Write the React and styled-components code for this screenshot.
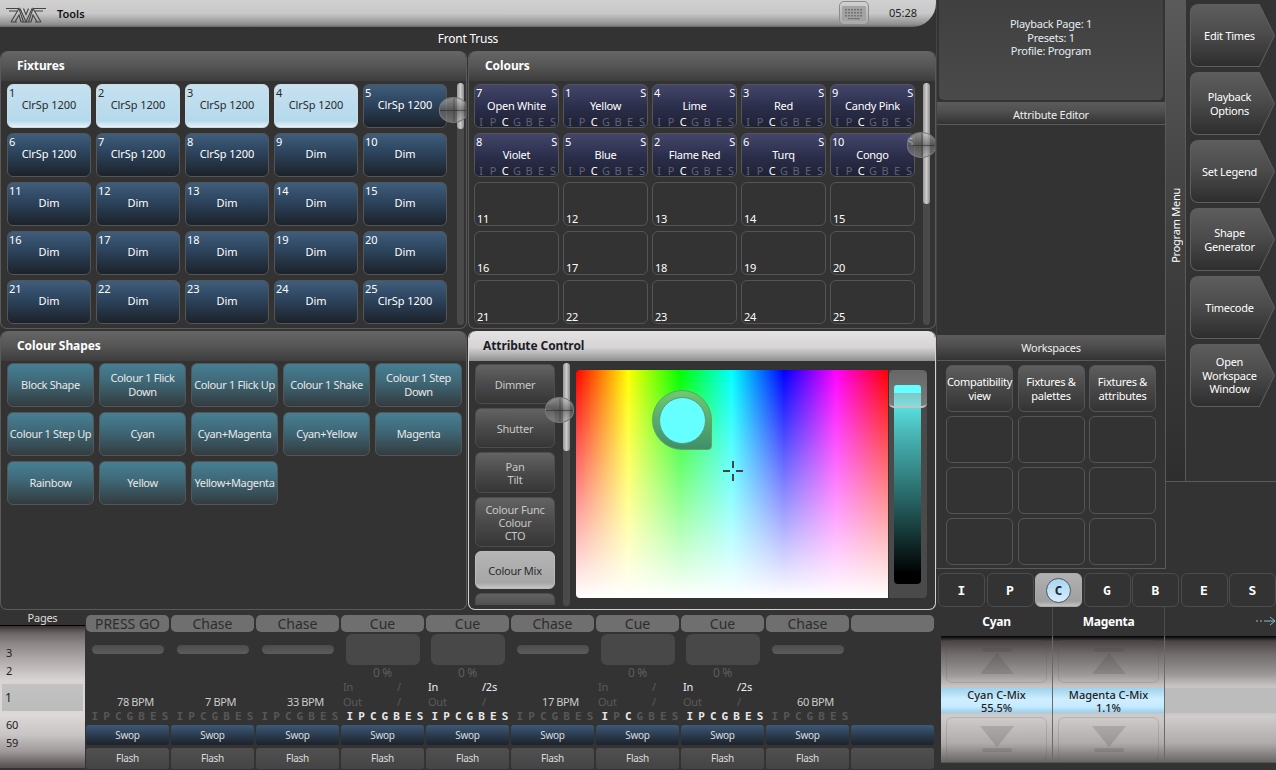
import React from 'react';
import styled, { createGlobalStyle } from 'styled-components';

const FONT = `"Noto Sans", "DejaVu Sans", sans-serif`;
const FLAG_FONT = `"DejaVu Sans Mono", monospace`;

const GlobalStyle = createGlobalStyle`
  html, body {
    margin: 0;
    padding: 0;
    background: #333;
  }
  * {
    box-sizing: border-box;
  }
  body {
    font-family: ${FONT};
    font-size: 11px;
    letter-spacing: -0.25px;
    color: #fff;
    overflow: hidden;
  }
`;

const Page = styled.div`
  width: 1276px;
  height: 770px;
  display: flex;
  background: #333;
  overflow: hidden;
`;

const MainColumn = styled.div`
  width: 936px;
  display: flex;
  flex-direction: column;
`;

const TitleBar = styled.div`
  height: 27px;
  display: flex;
  align-items: center;
  padding: 0 10px 0 6px;
  background: linear-gradient(#d0d0d0 0, #c8c8c8 50%, #8f8f8f 90%, #6a6a6a 100%);
  border-bottom-right-radius: 24px;
  color: #111;
`;

const ToolsLabel = styled.span`
  margin-left: 11px;
  font-size: 11px;
  font-weight: 600;
  letter-spacing: 0;
`;

const Spacer = styled.div`
  flex: 1;
`;

const KeyboardButton = styled.div`
  width: 30px;
  height: 24px;
  margin-top: -1px;
  display: flex;
  align-items: center;
  justify-content: center;
  border: 1px solid #8b8b8b;
  border-radius: 5px;
  background: linear-gradient(#d2d2d2, #a9a9a9);
`;

const Clock = styled.span`
  margin-left: 20px;
  margin-right: 9px;
  padding-bottom: 2px;
  font-size: 11px;
  letter-spacing: 0;
  color: #222;
`;

const Caption = styled.div`
  height: 24px;
  text-align: center;
  line-height: 24px;
  font-size: 12px;
`;

const PanelGrid = styled.div`
  display: grid;
  grid-template-columns: 468px 468px;
  grid-template-rows: 278px 279px;
  row-gap: 2px;
`;

const Panel = styled.section`
  position: relative;
  height: 100%;
  margin-right: ${(p) => (p.$last ? 0 : 1)}px;
  border: 1px solid ${(p) => (p.$active ? '#d8d0d0' : '#5a5a5a')};
  border-top: 0;
  border-radius: 7px;
  overflow: hidden;
`;

const PanelHeader = styled.h2`
  margin: 0;
  height: 30px;
  padding-left: ${(p) => (p.$active ? 14 : 16)}px;
  line-height: 29px;
  font-size: 12px;
  font-weight: 700;
  letter-spacing: -0.1px;
  color: ${(p) => (p.$active ? '#1c1c28' : '#fff')};
  background: ${(p) =>
    p.$active
      ? 'linear-gradient(#e4e2e2, #d6d4d4 55%, #8f8f8f)'
      : 'linear-gradient(#666, #555 50%, #3d3d3d)'};
  border-top-left-radius: 7px;
  border-top-right-radius: 7px;
`;

const CellGrid = styled.div`
  display: grid;
  grid-template-columns: repeat(5, ${(p) => p.$w}px);
  grid-auto-rows: ${(p) => p.$h}px;
  column-gap: ${(p) => p.$gapX}px;
  row-gap: 5px;
  padding: ${(p) => p.$top}px 0 0 ${(p) => p.$left}px;
`;

const FixtureCell = styled.div`
  position: relative;
  display: flex;
  align-items: center;
  justify-content: center;
  padding-bottom: 4px;
  border: 1px solid ${(p) => (p.$selected ? '#cfd8dc' : '#555')};
  border-radius: 6px;
  font-size: 11px;
  letter-spacing: -0.05px;
  color: ${(p) => (p.$selected ? '#2a2a2a' : '#fff')};
  background: ${(p) =>
    p.$selected
      ? 'linear-gradient(#c6e1f0, #b4d9ec 85%, #e6f2f8)'
      : 'linear-gradient(#3f5d7c, #2e4660 40%, #1c222b)'};
`;

const CellNumber = styled.span`
  position: absolute;
  top: 1px;
  left: 1px;
  font-size: 11px;
  line-height: 13px;
`;

const PaletteCell = styled.div`
  position: relative;
  display: flex;
  justify-content: center;
  padding-top: 13px;
  border: 1px solid #555;
  border-radius: 6px;
  font-size: 11px;
  line-height: 16px;
  background: linear-gradient(#43466a, #2c2f4c 50%, #1f2133);
`;

const PaletteFlag = styled.span`
  position: absolute;
  top: 1px;
  right: 1px;
  line-height: 13px;
`;

const AttributeLetters = styled.div`
  position: absolute;
  left: 0;
  bottom: -1px;
  display: grid;
  grid-template-columns: repeat(7, 12px);
  justify-items: center;
  font-size: 11px;
  line-height: 13px;
`;

const Letter = styled.span`
  color: ${(p) => (p.$on ? '#fff' : '#5e627b')};
`;

const EmptyCell = styled.div`
  position: relative;
  border: 1px solid #555;
  border-radius: 6px;
`;

const EmptyNumber = styled.span`
  position: absolute;
  left: 2px;
  bottom: 0;
  line-height: 13px;
`;

const ShapeCell = styled.div`
  display: flex;
  align-items: center;
  justify-content: center;
  text-align: center;
  line-height: 14px;
  border: 1px solid #555;
  border-radius: 6px;
  font-size: 11px;
  letter-spacing: -0.35px;
  color: #e8e8e8;
  background: linear-gradient(#477f93, #3f6a7a 40%, #333c40);
`;

const ScrollTrack = styled.div`
  position: absolute;
  top: ${(p) => p.$top}px;
  bottom: 3px;
  left: ${(p) => p.$left}px;
  width: 7px;
  border-radius: 4px;
  background: #4a4a4a;
`;

const ScrollFill = styled.div`
  width: 100%;
  height: ${(p) => p.$h}px;
  border-radius: 4px;
  background: linear-gradient(90deg, #999, #ccc 50%, #888);
`;

const ScrollBall = styled.div`
  position: absolute;
  top: ${(p) => p.$top}px;
  left: ${(p) => p.$left}px;
  width: 29px;
  height: 26px;
  border-radius: 50% / 45%;
  border: 1px solid #777;
  background:
    linear-gradient(transparent 48%, rgba(40, 40, 40, 0.55) 48%, rgba(40, 40, 40, 0.55) 54%, transparent 54%),
    linear-gradient(90deg, transparent 48%, rgba(40, 40, 40, 0.25) 48%, rgba(40, 40, 40, 0.25) 54%, transparent 54%),
    linear-gradient(rgba(200, 200, 200, 0.6), rgba(100, 100, 100, 0.7) 50%, rgba(170, 170, 170, 0.5));
`;

const ControlBody = styled.div`
  display: flex;
  height: 247px;
  padding: 3px 0 0 6px;
`;

const AttributeList = styled.div`
  width: 80px;
  height: 241px;
  display: flex;
  flex-direction: column;
  gap: 4px;
  overflow: hidden;
`;

const AttributeButton = styled.div`
  flex: none;
  height: ${(p) => p.$h}px;
  display: flex;
  align-items: center;
  justify-content: center;
  text-align: center;
  line-height: 13px;
  border: 1px solid ${(p) => (p.$selected ? '#bbb' : '#4d4d4d')};
  border-radius: 6px;
  font-size: 11px;
  color: ${(p) => (p.$selected ? '#2b2b2b' : '#c8c8c8')};
  background: ${(p) =>
    p.$selected ? 'linear-gradient(#b5b5b5, #a6a6a6 85%, #c4c4c4)' : 'linear-gradient(#636363, #4a4a4a 50%, #363636)'};
`;

const ColourField = styled.div`
  position: relative;
  width: 312px;
  height: 228px;
  margin: 6px 0 0 21px;
  border-radius: 4px 0 0 4px;
  background:
    linear-gradient(rgba(255, 255, 255, 0), #fff),
    linear-gradient(90deg, #f00, #ff0 16.67%, #0f0 33.33%, #0ff 50%, #00f 66.67%, #f0f 83.33%, #f00);
`;

const Pin = styled.div`
  position: absolute;
  left: 76px;
  top: 20px;
  width: 60px;
  height: 60px;
  display: flex;
  align-items: center;
  justify-content: center;
  border-radius: 50% 50% 4px 50%;
  background: linear-gradient(#6fca6f, #3f8f6b);
  border: 1px solid #5fa55f;
`;

const PinDot = styled.div`
  width: 47px;
  height: 47px;
  border-radius: 50%;
  background: #6ff;
  border: 1px solid #5d9a7a;
`;

const CrossMark = styled.svg`
  position: absolute;
  left: 147px;
  top: 91px;
`;

const LevelPanel = styled.div`
  position: relative;
  width: 38px;
  height: 228px;
  margin: 6px 0 0 1px;
  padding: 15px 6px 14px 5px;
  border-radius: 0 4px 4px 0;
  background: #4a4a4a;
`;

const LevelBar = styled.div`
  height: 100%;
  border-radius: 4px;
  background: linear-gradient(#6ff, #48b4b4 25%, #2a6a6a 55%, #000 95%);
`;

const LevelThumb = styled.div`
  position: absolute;
  top: 0;
  left: 0;
  width: 38px;
  height: 38px;
  border-radius: 5px;
  border-bottom: 2px solid #c4c4c4;
  background: linear-gradient(#666, rgba(130, 130, 130, 0.65) 35%, rgba(205, 215, 215, 0.35));

  &::after {
    content: '';
    position: absolute;
    left: 5px;
    right: 6px;
    top: 15px;
    height: 8px;
    border-radius: 3px 3px 0 0;
    background: #6ff;
  }
`;

const PlaybackStrip = styled.div`
  flex: 1;
  display: flex;
`;

const PagesColumn = styled.div`
  width: 85px;
  margin-right: 1px;
  display: flex;
  flex-direction: column;
`;

const PagesTitle = styled.div`
  height: 16px;
  line-height: 16px;
  text-align: center;
  font-size: 11px;
  color: #ddd;
  border-bottom: 1px solid #000;
`;

const PagesWheel = styled.div`
  height: 142px;
  padding-top: 18px;
  font-size: 11px;
  color: #222;
  background: linear-gradient(#3a3232, #6a6464 5%, #8e8888 13%, #b0aaaa 24%, #d8d4d4 38%, #dcd8d8 63%, #c8c4c4 77%, #a09a9a 88%, #5a5555 99%);
`;

const PageItem = styled.div`
  height: ${(p) => p.$h}px;
  line-height: ${(p) => p.$h}px;
  padding-left: 6px;
`;

const PageCurrent = styled.div`
  height: 27px;
  margin: 4px 2px 5px 2px;
  padding-left: 3px;
  line-height: 27px;
  font-size: 12px;
  background: linear-gradient(#c2c2c2, #bcbcbc);
`;

const PlaybackList = styled.div`
  display: flex;
  gap: 2px;
`;

const PlaybackColumn = styled.div`
  width: 83px;
  padding-top: 5px;
  display: flex;
  flex-direction: column;
`;

const Legend = styled.div`
  height: 17px;
  line-height: 17px;
  border-radius: 5px;
  background: #6f6f6f;
  text-align: center;
  font-size: 14px;
  letter-spacing: 0;
  color: #2d2d2d;
`;

const FaderArea = styled.div`
  height: 33px;
  margin-top: 1px;
  display: flex;
  align-items: center;
  justify-content: center;
`;

const BarMeter = styled.div`
  width: 72px;
  height: 9px;
  border-radius: 5px;
  background: linear-gradient(#4c4c4c, #5c5c5c);
`;

const BoxMeter = styled.div`
  width: 74px;
  height: 31px;
  border-radius: 6px;
  background: #484848;
`;

const StatusArea = styled.div`
  position: relative;
  height: 42px;
`;

const Percent = styled.div`
  text-align: center;
  line-height: 13px;
  font-size: 12px;
  color: #5e5e5e;
`;

const Bpm = styled.div`
  position: absolute;
  left: 0;
  right: 0;
  top: 29px;
  padding-left: 16px;
  text-align: center;
  line-height: 14px;
  font-size: 11px;
  letter-spacing: -0.4px;
  color: #ccc;
`;

const TimeRow = styled.div`
  display: flex;
  padding-left: 2px;
  height: 15px;
  line-height: 15px;
  font-size: 11px;
  color: ${(p) => (p.$lit ? '#eee' : '#5a5a5a')};
`;

const TimeLabel = styled.span`
  width: 54px;
`;

const Flags = styled.div`
  height: 16px;
  display: grid;
  grid-template-columns: repeat(7, 11.7px);
  justify-items: center;
  padding-left: 3px;
  line-height: 17px;
  font-family: ${FLAG_FONT};
  font-size: 11px;
  font-weight: 700;
  letter-spacing: 0;
`;

const Flag = styled.span`
  color: ${(p) => (p.$on ? '#e8e8e8' : '#585858')};
`;

const SwopKey = styled.div`
  height: 20px;
  margin-top: 1px;
  line-height: 20px;
  text-align: center;
  font-size: 10px;
  color: #ddd;
  border-radius: 3px;
  background: linear-gradient(#3e5a78, #2c3f54 45%, #1d2229);
`;

const FlashKey = styled.div`
  height: 21px;
  margin-top: 3px;
  line-height: 21px;
  text-align: center;
  font-size: 10px;
  color: #ddd;
  border-radius: 3px;
  background: linear-gradient(#505050, #444);
`;

const SideColumn = styled.div`
  width: 340px;
  display: flex;
  flex-direction: column;
`;

const SideTop = styled.div`
  height: 573px;
  display: flex;
`;

const EditorColumn = styled.div`
  width: 230px;
  height: 569px;
  display: flex;
  flex-direction: column;
  border-right: 1px solid #5a5a5a;
  border-bottom: 1px solid #5a5a5a;
  border-left: 1px solid #444;
`;

const InfoBox = styled.div`
  height: 100px;
  flex: none;
  margin: 0 2px 2px 2px;
  padding-top: 17px;
  border-radius: 0 0 5px 5px;
  background: linear-gradient(#404040, #4a4a4a);
  text-align: center;
  line-height: 13.5px;
  font-size: 11px;
  color: #e4ecf2;
`;

const SectionHeader = styled.div`
  height: ${(p) => p.$h}px;
  flex: none;
  line-height: ${(p) => p.$lh}px;
  text-align: center;
  font-size: 11px;
  color: #eee;
  border-bottom: 1px solid #5a5a5a;
  background: linear-gradient(#5c5c5c, #505050 40%, #333);
`;

const EditorBody = styled.div`
  height: ${(p) => p.$h}px;
  flex: none;
`;

const WorkspaceGrid = styled.div`
  display: grid;
  grid-template-columns: repeat(3, 67px);
  grid-auto-rows: 46.5px;
  column-gap: 4.5px;
  row-gap: 4.5px;
  padding: 4px 0 0 9px;
`;

const WorkspaceCell = styled.div`
  display: flex;
  align-items: center;
  justify-content: center;
  padding-top: 1px;
  text-align: center;
  line-height: 14px;
  font-size: 11px;
  border: 1px solid #555;
  border-radius: 6px;
  background: ${(p) => (p.$filled ? 'linear-gradient(#5e5e5e, #4a4a4a 45%, #343434)' : 'transparent')};
`;

const ProgramSide = styled.div`
  flex: 1;
  display: flex;
  height: 482px;
  border-bottom: 1px solid #5a5a5a;
`;

const ProgramStrip = styled.div`
  width: 20px;
  display: flex;
  align-items: center;
  justify-content: center;
  padding-bottom: 30px;
  border-right: 1px solid #5a5a5a;
  background: linear-gradient(#5a5a5a, #444 40%, #2e2e2e);
`;

const ProgramLabel = styled.span`
  writing-mode: vertical-rl;
  transform: rotate(180deg);
  font-size: 11px;
`;

const ChevronList = styled.div`
  flex: 1;
  display: flex;
  flex-direction: column;
  gap: 5px;
  padding: 4px 0 0 4px;
`;

const Chevron = styled.div`
  width: 85px;
  height: 63px;
  padding: 1px;
  border-radius: 8px 0 0 8px;
  background: #5e5e5e;
  clip-path: polygon(0 0, 82% 0, 100% 50%, 82% 100%, 0 100%);
`;

const ChevronInner = styled.div`
  width: 100%;
  height: 100%;
  display: flex;
  align-items: center;
  justify-content: center;
  padding-right: 6px;
  text-align: center;
  line-height: 13.5px;
  font-size: 11px;
  border-radius: 7px 0 0 7px;
  clip-path: polygon(0 0, 82% 0, 100% 50%, 82% 100%, 0 100%);
  background: linear-gradient(#5d5d5d, #4c4c4c 45%, #2e2e2e);
`;

const GroupBar = styled.div`
  height: 34px;
  display: flex;
  gap: 1.5px;
  padding-left: 2px;
`;

const GroupButton = styled.div`
  width: 47px;
  display: flex;
  align-items: center;
  justify-content: center;
  border: 1px solid ${(p) => (p.$selected ? '#aaa' : '#4c4c4c')};
  border-radius: 6px;
  font-family: ${FLAG_FONT};
  font-size: 13px;
  font-weight: 700;
  letter-spacing: 0;
  background: ${(p) => (p.$selected ? 'linear-gradient(#b0b0b0, #a0a0a0 85%, #c4c4c4)' : 'transparent')};
`;

const GroupDot = styled.span`
  width: 25px;
  height: 25px;
  display: flex;
  align-items: center;
  justify-content: center;
  border-radius: 50%;
  border: 1px solid #556;
  color: #223;
  background: linear-gradient(#a8d6f2, #d6eefc);
`;

const WheelHeaders = styled.div`
  display: flex;
  height: 29px;
  margin-left: 5px;
`;

const WheelHeading = styled.div`
  position: relative;
  flex: none;
  width: 112px;
  line-height: 27px;
  padding-top: 1px;
  text-align: center;
  font-size: 12px;
  font-weight: 700;
  border-right: 1px solid #4d4d4d;
`;

const PageArrow = styled.svg`
  position: absolute;
  top: 9px;
  right: 0;
`;

const WheelArea = styled.div`
  margin-left: 5px;
  height: 127px;
  display: flex;
  overflow: hidden;
  border-bottom: 1px solid #555;
  background: linear-gradient(#000 0, #4a4444 4%, #706a6a 14%, #9a9696 30%, #c8c4c4 40%, #c4c4c4 60%, #d0cccc 64%, #b0acac 85%, #6a6666 100%);
`;

const WheelColumn = styled.div`
  flex: none;
  width: 112px;
  display: flex;
  flex-direction: column;
  border-right: 1px solid #6a6a6a;
`;

const WheelStep = styled.div`
  height: ${(p) => p.$h}px;
  margin: ${(p) => p.$before}px 5px ${(p) => p.$after}px 5px;
  display: flex;
  flex-direction: column;
  align-items: center;
  justify-content: flex-start;
  padding-top: ${(p) => p.$pad}px;
  gap: 1px;
  border: 1px solid rgba(90, 90, 90, 0.22);
  border-radius: 6px;
`;

const WheelTriangle = styled.div`
  width: 0;
  height: 0;
  border-left: 17px solid transparent;
  border-right: 17px solid transparent;
  ${(p) =>
    p.$up
      ? 'border-bottom: 21px solid rgba(70, 70, 70, 0.2);'
      : 'border-top: 21px solid rgba(70, 70, 70, 0.2);'}
`;

const WheelDash = styled.div`
  width: 30px;
  height: 4px;
  border-radius: 2px;
  background: rgba(70, 70, 70, 0.2);
`;

const WheelValue = styled.div`
  height: 25px;
  line-height: 13px;
  text-align: center;
  font-size: 11px;
  font-weight: 500;
  letter-spacing: 0;
  color: #222;
  background: linear-gradient(#9ed2ee, #cfeeff 45%, #c4eaff 75%, #9ccde8);
`;

const WheelBand = styled.div`
  height: 25px;
  margin-top: 52px;
  background: #bcbcbc;
`;

const FixtureNames = [
  ...Array(8).fill('ClrSp 1200'),
  ...Array(16).fill('Dim'),
  'ClrSp 1200',
];

const paletteCells = [
  [7, 'Open White'],
  [1, 'Yellow'],
  [4, 'Lime'],
  [3, 'Red'],
  [9, 'Candy Pink'],
  [8, 'Violet'],
  [5, 'Blue'],
  [2, 'Flame Red'],
  [6, 'Turq'],
  [10, 'Congo'],
];

const shapes = [
  'Block Shape',
  'Colour 1 Flick Down',
  'Colour 1 Flick Up',
  'Colour 1 Shake',
  'Colour 1 Step Down',
  'Colour 1 Step Up',
  'Cyan',
  'Cyan+Magenta',
  'Cyan+Yellow',
  'Magenta',
  'Rainbow',
  'Yellow',
  'Yellow+Magenta',
];

const attributes = [
  ['Dimmer', 40],
  ['Shutter', 40],
  [['Pan', 'Tilt'], 41],
  [['Colour Func', 'Colour', 'CTO'], 50],
  ['Colour Mix', 38, true],
  ['', 30],
];

const playbacks = [
  { legend: 'PRESS GO', meter: 'bar', bpm: '78 BPM', lit: '' },
  { legend: 'Chase', meter: 'bar', bpm: '7 BPM', lit: '' },
  { legend: 'Chase', meter: 'bar', bpm: '33 BPM', lit: '' },
  { legend: 'Cue', meter: 'box', lit: 'IPCGBES', inLit: false, time: true },
  { legend: 'Cue', meter: 'box', lit: 'IPCGBES', inLit: true, time: true },
  { legend: 'Chase', meter: 'bar', bpm: '17 BPM', lit: '' },
  { legend: 'Cue', meter: 'box', lit: 'IC', inLit: false, time: true },
  { legend: 'Cue', meter: 'box', lit: 'IPCGBES', inLit: true, time: true },
  { legend: 'Chase', meter: 'bar', bpm: '60 BPM', lit: '' },
  { legend: '', blank: true },
];

const LETTERS = 'IPCGBES'.split('');

const Lines = ({ value }) =>
  (Array.isArray(value) ? value : [value]).map((line, i) => (
    <React.Fragment key={i}>
      {i > 0 && <br />}
      {line}
    </React.Fragment>
  ));

const Logo = () => (
  <svg width="40" height="20" viewBox="0 0 40 20" fill="none" stroke="#444" strokeWidth="1.1">
    <path d="M0 4.5h13M27 4.5h13M3 7h8M29 7h8" />
    <path d="M5 18L13 4.5l4.5 13.5M9 18l4-7 2 7" />
    <path d="M14 4.5l6 13.5 6-13.5M17.5 4.5l2.5 6 2.5-6" />
    <path d="M22.5 18L27 4.5l8 13.5M25 18l2-7 4 7" />
    <path d="M5 18h6M15 18h10M29 18h6" />
  </svg>
);

const KeyboardIcon = () => (
  <svg width="24" height="15" viewBox="0 0 24 15">
    <rect x="0" y="0" width="24" height="15" rx="1" fill="#a3a3a3" />
    <g fill="#747474">
      {[3, 6, 9].map((y) =>
        [3, 6, 9, 12, 15, 18].map((x) => <rect key={`${x}-${y}`} x={x} y={y} width="2" height="1.5" />)
      )}
      <rect x="6" y="12" width="12" height="1.2" />
    </g>
  </svg>
);

const App = () => (
  <Page>
    <GlobalStyle />
    <MainColumn>
      <TitleBar>
        <Logo />
        <ToolsLabel>Tools</ToolsLabel>
        <Spacer />
        <KeyboardButton>
          <KeyboardIcon />
        </KeyboardButton>
        <Clock>05:28</Clock>
      </TitleBar>
      <Caption>Front Truss</Caption>
      <PanelGrid>
        <Panel>
          <PanelHeader>Fixtures</PanelHeader>
          <CellGrid $w={84} $h={44} $gapX={5} $left={6} $top={3}>
            {FixtureNames.map((name, i) => (
              <FixtureCell key={i} $selected={i < 4}>
                <CellNumber>{i + 1}</CellNumber>
                {name}
              </FixtureCell>
            ))}
          </CellGrid>
          <ScrollTrack $top={32} $left={456}>
            <ScrollFill $h={46} />
          </ScrollTrack>
          <ScrollBall $top={46} $left={438} />
        </Panel>
        <Panel $last>
          <PanelHeader>Colours</PanelHeader>
          <CellGrid $w={85} $h={44} $gapX={4} $left={5} $top={3}>
            {paletteCells.map(([num, name]) => (
              <PaletteCell key={num}>
                <CellNumber>{num}</CellNumber>
                <PaletteFlag>S</PaletteFlag>
                {name}
                <AttributeLetters>
                  {LETTERS.map((l) => (
                    <Letter key={l} $on={l === 'C'}>
                      {l}
                    </Letter>
                  ))}
                </AttributeLetters>
              </PaletteCell>
            ))}
            {Array.from({ length: 15 }, (_, i) => (
              <EmptyCell key={i}>
                <EmptyNumber>{i + 11}</EmptyNumber>
              </EmptyCell>
            ))}
          </CellGrid>
          <ScrollTrack $top={32} $left={454}>
            <ScrollFill $h={121} />
          </ScrollTrack>
          <ScrollBall $top={81} $left={438} />
        </Panel>
        <Panel>
          <PanelHeader>Colour Shapes</PanelHeader>
          <CellGrid $w={87} $h={44} $gapX={5} $left={6} $top={2}>
            {shapes.map((s) => (
              <ShapeCell key={s}>{s}</ShapeCell>
            ))}
          </CellGrid>
        </Panel>
        <Panel $last $active>
          <PanelHeader $active>Attribute Control</PanelHeader>
          <ControlBody>
            <AttributeList>
              {attributes.map(([label, h, selected], i) => (
                <AttributeButton key={i} $h={h} $selected={selected}>
                  <span>
                    <Lines value={label} />
                  </span>
                </AttributeButton>
              ))}
            </AttributeList>
            <ColourField>
              <Pin>
                <PinDot />
              </Pin>
              <CrossMark width="20" height="20" viewBox="0 0 20 20" fill="none" stroke="#444" strokeWidth="2">
                <path d="M10 0v7M10 13v7M0 10h7M13 10h7" />
              </CrossMark>
            </ColourField>
            <LevelPanel>
              <LevelBar />
              <LevelThumb />
            </LevelPanel>
          </ControlBody>
          <ScrollTrack $top={32} $left={94}>
            <ScrollFill $h={88} />
          </ScrollTrack>
          <ScrollBall $top={66} $left={76} />
        </Panel>
      </PanelGrid>
      <PlaybackStrip>
        <PagesColumn>
          <PagesTitle>Pages</PagesTitle>
          <PagesWheel>
            <PageItem $h={18}>3</PageItem>
            <PageItem $h={18}>2</PageItem>
            <PageCurrent>1</PageCurrent>
            <PageItem $h={18}>60</PageItem>
            <PageItem $h={18}>59</PageItem>
          </PagesWheel>
        </PagesColumn>
        <PlaybackList>
          {playbacks.map((pb, i) => (
            <PlaybackColumn key={i}>
              <Legend>{pb.legend}</Legend>
              <FaderArea>
                {pb.meter === 'bar' && <BarMeter />}
                {pb.meter === 'box' && <BoxMeter />}
              </FaderArea>
              <StatusArea>
                {pb.meter === 'box' && <Percent>0 %</Percent>}
                {pb.bpm && <Bpm>{pb.bpm}</Bpm>}
                {pb.time && (
                  <>
                    <TimeRow $lit={pb.inLit}>
                      <TimeLabel>In</TimeLabel>/{pb.inLit && '2s'}
                    </TimeRow>
                    <TimeRow>
                      <TimeLabel>Out</TimeLabel>/
                    </TimeRow>
                  </>
                )}
              </StatusArea>
              <Flags>
                {!pb.blank &&
                  LETTERS.map((l) => (
                    <Flag key={l} $on={pb.lit.includes(l)}>
                      {l}
                    </Flag>
                  ))}
              </Flags>
              <SwopKey>{!pb.blank && 'Swop'}</SwopKey>
              <FlashKey>{!pb.blank && 'Flash'}</FlashKey>
            </PlaybackColumn>
          ))}
        </PlaybackList>
      </PlaybackStrip>
    </MainColumn>
    <SideColumn>
      <SideTop>
        <EditorColumn>
          <InfoBox>
            Playback Page: 1
            <br />
            Presets: 1
            <br />
            Profile: Program
          </InfoBox>
          <SectionHeader $h={23} $lh={26}>
            Attribute Editor
          </SectionHeader>
          <EditorBody $h={210} />
          <SectionHeader $h={26} $lh={26}>
            Workspaces
          </SectionHeader>
          <WorkspaceGrid>
            <WorkspaceCell $filled>Compatibility view</WorkspaceCell>
            <WorkspaceCell $filled>
              Fixtures &amp;
              <br />
              palettes
            </WorkspaceCell>
            <WorkspaceCell $filled>
              Fixtures &amp;
              <br />
              attributes
            </WorkspaceCell>
            {Array.from({ length: 9 }, (_, i) => (
              <WorkspaceCell key={i} />
            ))}
          </WorkspaceGrid>
        </EditorColumn>
        <ProgramSide>
          <ProgramStrip>
            <ProgramLabel>Program Menu</ProgramLabel>
          </ProgramStrip>
          <ChevronList>
            {[
              ['Edit Times'],
              ['Playback', 'Options'],
              ['Set Legend'],
              ['Shape', 'Generator'],
              ['Timecode'],
              ['Open', 'Workspace', 'Window'],
            ].map((lines) => (
              <Chevron key={lines[0]}>
                <ChevronInner>
                  <span>
                    <Lines value={lines} />
                  </span>
                </ChevronInner>
              </Chevron>
            ))}
          </ChevronList>
        </ProgramSide>
      </SideTop>
      <GroupBar>
        {LETTERS.map((l) => (
          <GroupButton key={l} $selected={l === 'C'}>
            {l === 'C' ? <GroupDot>C</GroupDot> : l}
          </GroupButton>
        ))}
      </GroupBar>
      <WheelHeaders>
        <WheelHeading>Cyan</WheelHeading>
        <WheelHeading>Magenta</WheelHeading>
        <WheelHeading>
          <PageArrow width="20" height="10" viewBox="0 0 20 10" fill="none" stroke="#8fb8d0" strokeWidth="1">
            <path d="M0 5h2M4 5h2M8 5h11M14 1l5 4-5 4" />
          </PageArrow>
        </WheelHeading>
      </WheelHeaders>
      <WheelArea>
        {[
          ['Cyan C-Mix', '55.5%'],
          ['Magenta C-Mix', '1.1%'],
        ].map(([name, val]) => (
          <WheelColumn key={name}>
            <WheelStep $h={43} $before={4} $after={5} $pad={7}>
              <WheelDash />
              <WheelTriangle $up />
            </WheelStep>
            <WheelValue>
              {name}
              <br />
              {val}
            </WheelValue>
            <WheelStep $h={45} $before={4} $after={0} $pad={8}>
              <WheelTriangle />
              <WheelDash />
            </WheelStep>
          </WheelColumn>
        ))}
        <WheelColumn>
          <WheelBand />
        </WheelColumn>
      </WheelArea>
    </SideColumn>
  </Page>
);

export default App;
